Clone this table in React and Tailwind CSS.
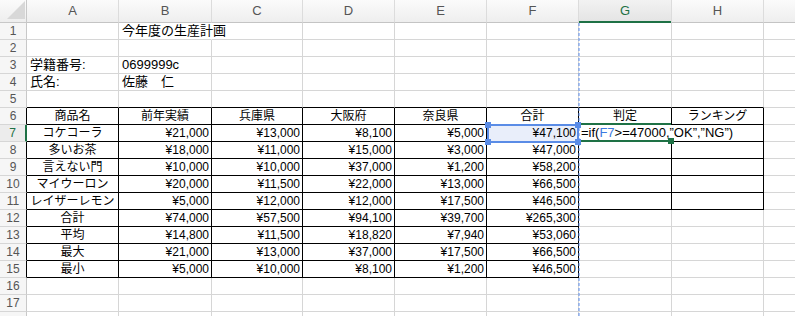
import React from "react";

const COLS = ["A", "B", "C", "D", "E", "F", "G", "H"];

// sheet contents, indexed by row number, columns A..H
const SHEET = {
  1: [null, "今年度の生産計画"],
  3: ["学籍番号:", "0699999c"],
  4: ["氏名:", "佐藤　仁"],
  6: ["商品名", "前年実績", "兵庫県", "大阪府", "奈良県", "合計", "判定", "ランキング"],
  7: ["コケコーラ", "¥21,000", "¥13,000", "¥8,100", "¥5,000", "¥47,100"],
  8: ["多いお茶", "¥18,000", "¥11,000", "¥15,000", "¥3,000", "¥47,000"],
  9: ["言えない門", "¥10,000", "¥10,000", "¥37,000", "¥1,200", "¥58,200"],
  10: ["マイウーロン", "¥20,000", "¥11,500", "¥22,000", "¥13,000", "¥66,500"],
  11: ["レイザーレモン", "¥5,000", "¥12,000", "¥12,000", "¥17,500", "¥46,500"],
  12: ["合計", "¥74,000", "¥57,500", "¥94,100", "¥39,700", "¥265,300"],
  13: ["平均", "¥14,800", "¥11,500", "¥18,820", "¥7,940", "¥53,060"],
  14: ["最大", "¥21,000", "¥13,000", "¥37,000", "¥17,500", "¥66,500"],
  15: ["最小", "¥5,000", "¥10,000", "¥8,100", "¥1,200", "¥46,500"],
};

// 17 numbered rows plus the sliver of row 18 at the bottom edge
const ROWS = Array.from({ length: 18 }, (_, i) => i + 1);

const inTable = (r, c) =>
  (r >= 6 && r <= 11 && c >= 1 && c <= 8) || (r >= 12 && r <= 15 && c >= 1 && c <= 6);

function Handle({ className }) {
  return <span className={"absolute w-[6px] h-[6px] " + className} />;
}

function DataCell({ r, c }) {
  const text = SHEET[r] ? SHEET[r][c - 1] : null;
  const hideRight = (r === 1 && c === 2) || (r === 7 && c === 7);
  const rightBorder = hideRight
    ? "border-r-transparent"
    : inTable(r, c)
    ? "border-r-black"
    : "border-r-[#d6d6d6]";
  const bottomBorder =
    inTable(r, c) || (r === 5 && c >= 1 && c <= 8) ? "border-b-black" : "border-b-[#d6d6d6]";

  let align = "justify-end pr-[2px]";
  if (r <= 4) align = "justify-start pl-[3px]";
  else if (r === 6 || c === 1) align = "justify-center";

  const selected = r === 7 && c === 6;
  const editing = r === 7 && c === 7;

  return (
    <div
      className={
        "relative flex items-center whitespace-nowrap border-r border-b " +
        rightBorder +
        " " +
        bottomBorder +
        " " +
        align +
        (r <= 4 ? " text-[13px]" : " text-[12px]") +
        (selected ? " bg-[#e9eefa]" : "")
      }
    >
      {editing ? (
        <>
          <span className="absolute left-[2px] z-10 text-[13px]">
            =if(<span className="text-[#3d7ae0]">F7</span>&gt;=47000,”OK”,”NG”)
          </span>
          <span className="absolute -top-[2px] left-0 right-0 h-[2px] bg-[#1e7145] z-10" />
          <span className="absolute -bottom-px left-0 right-0 h-[2px] bg-[#1e7145] z-10" />
          <Handle className="-right-[3px] -bottom-[3px] bg-[#1e7145] z-20" />
        </>
      ) : (
        text && <span>{text}</span>
      )}
      {selected && (
        <span className="absolute -top-px -bottom-[2px] left-0 -right-px border-2 border-[#5a8ce6] z-20">
          <Handle className="-left-[4px] -top-[4px] bg-[#5a8ce6]" />
          <Handle className="-right-[4px] -top-[4px] bg-[#5a8ce6]" />
          <Handle className="-left-[4px] -bottom-[4px] bg-[#5a8ce6]" />
          <Handle className="-right-[4px] -bottom-[4px] bg-[#5a8ce6]" />
        </span>
      )}
    </div>
  );
}

function RowHeader({ r }) {
  const active = r === 7;
  const border = active
    ? "border-r-2 border-r-[#1e7145]"
    : r >= 6 && r <= 15
    ? "border-r border-r-black"
    : "border-r border-r-[#c8c8c8]";
  return (
    <div
      className={
        "flex items-center justify-center border-b border-b-[#d6d6d6] text-[12px] " +
        border +
        (active ? " bg-[#ececec] text-[#1e7145]" : " bg-[#f6f6f6] text-[#555]")
      }
    >
      {r <= 17 ? r : null}
    </div>
  );
}

export default function App() {
  return (
    <div
      className="relative w-[795px] h-[316px] overflow-hidden bg-white text-black"
      style={{ fontFamily: '"Liberation Sans", "Noto Sans CJK JP", sans-serif' }}
    >
      <div className="grid grid-cols-[27px_92px_93px_91px_92px_92px_92px_93px_92px_31px] grid-rows-[23px_repeat(18,17px)]">
        {/* corner */}
        <div className="relative bg-linear-to-b from-[#fbfbfb] to-[#eeeeee] border-r border-b border-[#c8c8c8]">
          <svg className="absolute left-0 top-0" width="26" height="22">
            <polygon points="7,19 25,19 25,1" fill="#d8d8d8" />
          </svg>
        </div>
        {COLS.map((col) => (
          <div
            key={col}
            className={
              "relative flex items-center justify-center text-[13px] border-r border-r-[#dcdcdc] border-b border-b-[#c4c4c4] bg-linear-to-b " +
              (col === "G"
                ? "from-[#f2f2f2] to-[#e4e4e4] text-[#1e7145]"
                : "from-[#fbfbfb] to-[#eeeeee] text-[#555]")
            }
          >
            {col}
            {col === "G" && (
              <span className="absolute left-0 right-0 -bottom-px h-[2px] bg-[#1e7145]" />
            )}
          </div>
        ))}
        <div className="bg-linear-to-b from-[#fbfbfb] to-[#eeeeee] border-b border-b-[#c4c4c4]" />

        {ROWS.map((r) => (
          <React.Fragment key={r}>
            <RowHeader r={r} />
            {COLS.map((col, i) => (
              <DataCell key={col} r={r} c={i + 1} />
            ))}
            <div className="border-b border-b-[#d6d6d6]" />
          </React.Fragment>
        ))}
      </div>

      {/* page break */}
      <svg className="absolute left-[578px] top-[23px] z-30" width="2" height="293">
        <line x1="1" y1="0" x2="1" y2="293" stroke="#5b8def" strokeWidth="1" strokeDasharray="3 2" />
      </svg>
    </div>
  );
}
